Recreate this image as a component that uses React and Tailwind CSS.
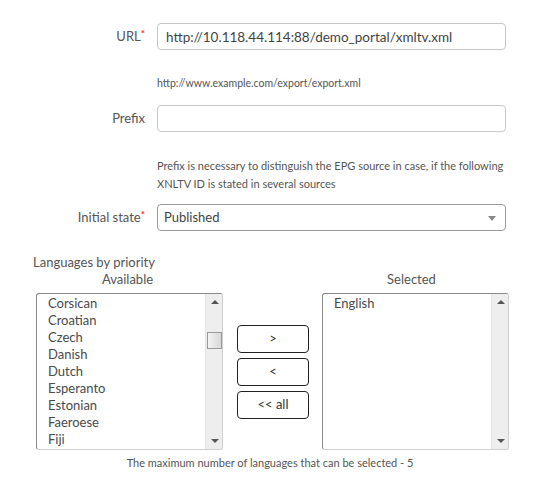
import React from "react";

const available = ["Corsican", "Croatian", "Czech", "Danish", "Dutch", "Esperanto", "Estonian", "Faeroese", "Fiji"];
const selected = ["English"];

function Scrollbar({ thumb }) {
  return (
    <div className="relative w-[17px] h-full bg-[#eeeeee] border-l border-[#e4e4e4]">
      <span className="absolute left-[5px] top-[6px] w-0 h-0 border-x-[4px] border-x-transparent border-b-[4px] border-b-[#555]" />
      {thumb && (
        <span className="absolute left-[1px] top-[38px] w-[15px] h-[17px] border border-[#9a9a9a] bg-gradient-to-r from-[#f4f4f4] to-[#d8d8d8]" />
      )}
      <span className="absolute left-[5px] bottom-[6px] w-0 h-0 border-x-[4px] border-x-transparent border-t-[4px] border-t-[#555]" />
    </div>
  );
}

function ListBox({ items, thumb }) {
  return (
    <div className="flex w-[187px] h-[157px] bg-white rounded-[3px] border border-[#cfcfcf] border-t-[#8a8a8a] border-l-[#8a8a8a] overflow-hidden">
      <ul className="flex-1 pl-[11px] pt-[1px] text-[13px] leading-[17px] text-[#4a4a4a]">
        {items.map((it) => (
          <li key={it}>{it}</li>
        ))}
      </ul>
      <Scrollbar thumb={thumb} />
    </div>
  );
}

function Row({ label, required, children }) {
  return (
    <div className="flex items-center">
      <label className="w-[148px] pr-[3px] text-right text-[13px] text-[#555]">
        {label}
        {required && <span className="text-[#e0302a] font-bold relative -top-[4px] text-[10px]">*</span>}
      </label>
      <div className="ml-[9px] w-[349px]">{children}</div>
    </div>
  );
}

const inputCls =
  "w-full h-[27px] rounded-[4px] border border-[#c8c8c8] bg-white px-[8px] text-[13.5px] text-[#444] outline-none";

export default function App() {
  return (
    <div className="w-[546px] h-[498px] bg-white pt-[23px] font-['Lato',sans-serif] text-[#555]">
      <Row label="URL" required>
        <input className={inputCls} defaultValue="http://10.118.44.114:88/demo_portal/xmltv.xml" />
      </Row>
      <p className="ml-[157px] mt-[25px] text-[10.5px] leading-[16px] text-[#555]">
        http://www.example.com/export/export.xml
      </p>

      <div className="mt-[14px]">
        <Row label="Prefix">
          <input className={inputCls} />
        </Row>
      </div>
      <p className="ml-[157px] mt-[25px] w-[350px] text-[11px] leading-[18px] text-[#555]">
        Prefix is necessary to distinguish the EPG source in case, if the following XNLTV ID is stated in several sources
      </p>

      <div className="mt-[11px]">
        <Row label="Initial state" required>
          <div className="relative flex items-center w-full h-[27px] rounded-[4px] border border-[#9a9a9a] bg-white px-[6px] text-[13px] text-[#444]">
            Published
            <span className="absolute right-[9px] top-[11px] w-0 h-0 border-x-[4px] border-x-transparent border-t-[5px] border-t-[#888]" />
          </div>
        </Row>
      </div>

      <p className="ml-[33px] mt-[23px] text-[13px] leading-[17px] text-[#555]">Languages by priority</p>
      <div className="flex ml-[36px] text-[13px] leading-[17px] text-[#555]">
        <div className="w-[187px] text-center -ml-[2px]">Available</div>
        <div className="w-[187px] ml-[97px] text-center">Selected</div>
      </div>

      <div className="flex items-center ml-[36px] mt-[5px]">
        <ListBox items={available} thumb />
        <div className="flex flex-col gap-[5px] ml-[14px] w-[72px]">
          {[">", "<", "<< all"].map((b) => (
            <button
              key={b}
              className="h-[28px] rounded-[4px] border border-[#222] bg-white text-[13px] text-[#333]"
            >
              {b}
            </button>
          ))}
        </div>
        <div className="ml-[13px]">
          <ListBox items={selected} />
        </div>
      </div>

      <p className="mt-[5px] w-[540px] text-center text-[11px] text-[#555]">
        The maximum number of languages that can be selected - 5
      </p>
    </div>
  );
}
